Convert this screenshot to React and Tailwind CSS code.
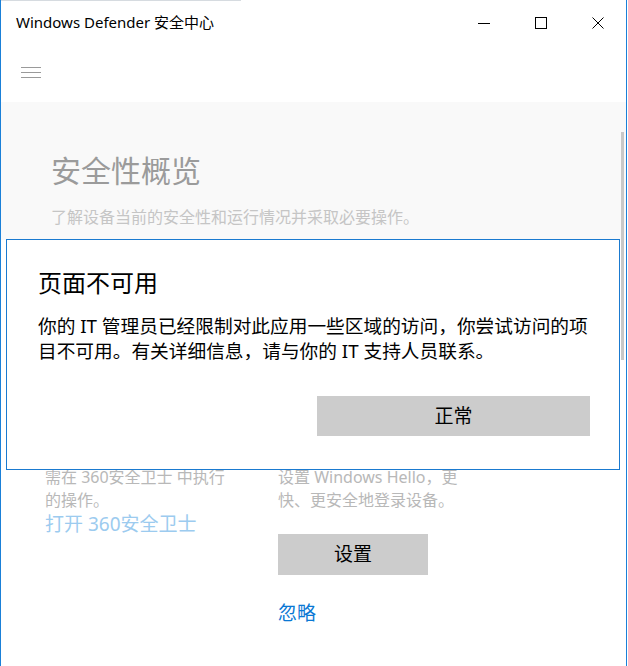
const font = { fontFamily: '"Noto Sans", "Noto Sans CJK SC", sans-serif' };

function WindowControls() {
  return (
    <div className="flex h-full">
      <div className="w-[57px] flex items-center justify-center">
        <svg width="12" height="12" viewBox="0 0 12 12">
          <path d="M0 6.5H12" stroke="#000" strokeWidth="1" />
        </svg>
      </div>
      <div className="w-[57px] flex items-center justify-center">
        <svg width="12" height="12" viewBox="0 0 12 12">
          <rect x="0.5" y="0.5" width="11" height="11" fill="none" stroke="#000" strokeWidth="1" />
        </svg>
      </div>
      <div className="w-[57px] flex items-center justify-center">
        <svg width="12" height="12" viewBox="0 0 12 12">
          <path d="M0.5 0.5L11.5 11.5M11.5 0.5L0.5 11.5" stroke="#000" strokeWidth="1" />
        </svg>
      </div>
    </div>
  );
}

export default function App() {
  return (
    <div className="relative w-[628px] h-[666px] bg-white overflow-hidden" style={font}>
      <div className="w-[627px] h-full flex flex-col border-l border-r border-[#1a80d8]">
        <div className="flex h-px shrink-0">
          <div className="w-[240px] bg-[#d6dbe0]" />
        </div>

        {/* title bar */}
        <div className="h-[43px] shrink-0 flex items-center justify-between">
          <div className="pl-[15px] text-[15px] text-black">Windows Defender 安全中心</div>
          <WindowControls />
        </div>

        {/* hamburger */}
        <div className="h-[58px] shrink-0 pl-[20px] pt-[23px]">
          <div className="w-[20px] flex flex-col gap-[4px]">
            <div className="h-px bg-[#9a9a9a]" />
            <div className="h-px bg-[#9a9a9a]" />
            <div className="h-px bg-[#9a9a9a]" />
          </div>
        </div>

        {/* header */}
        <div className="bg-[#f9f9f9] pl-[50px] pt-[49px] pb-[11px] shrink-0">
          <h1 className="text-[30px] leading-[40px] text-[#9b9b9b] font-normal">安全性概览</h1>
          <p className="mt-[14px] text-[16px] leading-[24px] text-[#c5c5c5]">
            了解设备当前的安全性和运行情况并采取必要操作。
          </p>
        </div>

        {/* cards */}
        <div className="flex pt-[226px] pl-[44px]">
          <div className="w-[233px]">
            <p className="text-[16px] leading-[23px] text-[#b8b8b8]">
              需在 360安全卫士 中执行
              <br />
              的操作。
            </p>
            <a className="block text-[19px] leading-[24px] text-[#9ccbef]">打开 360安全卫士</a>
          </div>
          <div className="w-[200px]">
            <p className="text-[16px] leading-[23px] text-[#b8b8b8]">
              设置 Windows Hello，更
              <br />
              快、更安全地登录设备。
            </p>
            <button className="mt-[22px] w-[150px] h-[41px] bg-[#cccccc] text-[19px] text-black flex items-center justify-center">
              设置
            </button>
            <a className="block mt-[25px] text-[19px] leading-[26px] text-[#0a78d4]">忽略</a>
          </div>
        </div>
      </div>

      {/* scrollbar */}
      <div className="absolute left-[621px] top-[132px] w-[3px] h-[228px] bg-[#c8c8c8]" />

      {/* dialog */}
      <div className="absolute left-[6px] top-[239px] w-[614px] h-[231px] bg-white border border-[#1a7ad0] pl-[31px] pr-[29px] pt-[27px]">
        <h2 className="text-[24px] leading-[32px] text-black font-normal">页面不可用</h2>
        <p className="mt-[14px] text-[18.7px] leading-[25px] text-black">
          你的 IT 管理员已经限制对此应用一些区域的访问，你尝试访问的项
          <br />
          目不可用。有关详细信息，请与你的 IT 支持人员联系。
        </p>
        <div className="flex justify-end mt-[33px]">
          <button className="w-[273px] h-[40px] bg-[#cccccc] text-[19px] text-black flex items-center justify-center">
            正常
          </button>
        </div>
      </div>
    </div>
  );
}
